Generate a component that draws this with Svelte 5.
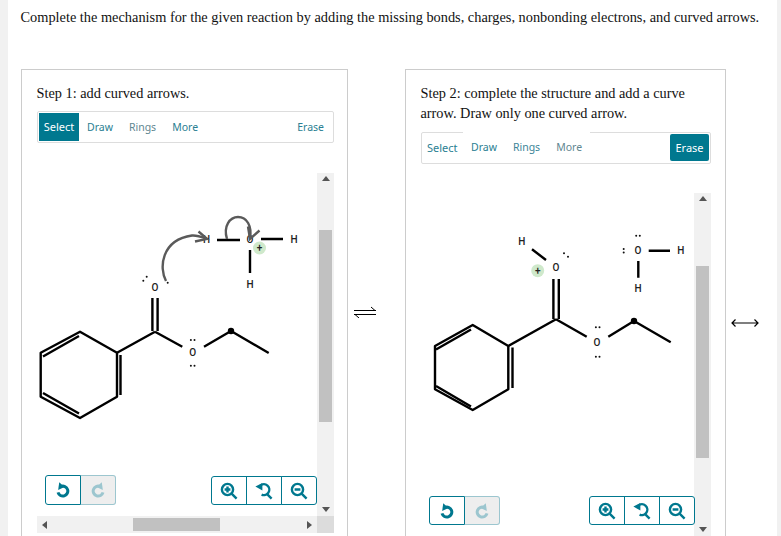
<script>
  const teal = '#00788f';
</script>

{#snippet undoIcon()}
  <svg class="ico" viewBox="0 0 16 16"><path d="M6 4.4A5 5 0 1 1 3 10.4" fill="none" stroke="currentColor" stroke-width="3"/><polygon points="3.6,0.6 3.6,8.4 9.4,4.6" fill="currentColor" transform="rotate(8 6 5)"/></svg>
{/snippet}
{#snippet redoIcon()}
  <svg class="ico" viewBox="0 0 16 16"><path d="M10 4.4A5 5 0 1 0 13 10.4" fill="none" stroke="currentColor" stroke-width="3"/><polygon points="12.4,0.6 12.4,8.4 6.6,4.6" fill="currentColor" transform="rotate(-8 10 5)"/></svg>
{/snippet}
{#snippet zoomIn()}
  <svg class="ico big" viewBox="0 0 18 18"><circle cx="7.5" cy="7.5" r="5.6" fill="none" stroke="currentColor" stroke-width="2.4"/><path d="M4.6 7.5h5.8M7.5 4.6v5.8M11.6 11.6l5 5" fill="none" stroke="currentColor" stroke-width="2.4"/></svg>
{/snippet}
{#snippet zoomOut()}
  <svg class="ico big" viewBox="0 0 18 18"><circle cx="7.5" cy="7.5" r="5.6" fill="none" stroke="currentColor" stroke-width="2.4"/><path d="M4.6 7.5h5.8M11.6 11.6l5 5" fill="none" stroke="currentColor" stroke-width="2.4"/></svg>
{/snippet}
{#snippet zoomReset()}
  <svg class="ico big" viewBox="0 0 18 18"><path d="M5.4 3.6A5.4 5.4 0 1 1 6.6 12.6" fill="none" stroke="currentColor" stroke-width="2.4"/><polygon points="0.4,4.6 7.4,1 7.4,8.6" fill="currentColor"/><path d="M11.6 11.6l5 5" fill="none" stroke="currentColor" stroke-width="2.4"/></svg>
{/snippet}

{#snippet controls(zoomClass)}
  <div class="group undo-group">
    <button class="cbtn">{@render undoIcon()}</button>
    <button class="cbtn off">{@render redoIcon()}</button>
  </div>
  <div class="group zoom-group {zoomClass}">
    <button class="cbtn">{@render zoomIn()}</button>
    <button class="cbtn">{@render zoomReset()}</button>
    <button class="cbtn">{@render zoomOut()}</button>
  </div>
{/snippet}

{#snippet pair(x, y, vertical)}
  {#if vertical}
    <circle cx={x} cy={y - 1.8} r="1"/><circle cx={x} cy={y + 1.8} r="1"/>
  {:else}
    <circle cx={x - 1.8} cy={y} r="1"/><circle cx={x + 1.8} cy={y} r="1"/>
  {/if}
{/snippet}

<div class="page">
  <p class="lead">Complete the mechanism for the given reaction by adding the missing bonds, charges, nonbonding electrons, and curved arrows.</p>

  <div class="row">
    <section class="panel p1">
      <p class="step">Step 1: add curved arrows.</p>
      <div class="toolbar">
        <span class="tool on">Select</span>
        <span class="tool">Draw</span>
        <span class="tool">Rings</span>
        <span class="tool">More</span>
        <span class="tool push">Erase</span>
      </div>
      <div class="scroller">
        <div class="canvas">
          <svg class="chem" width="280" height="343" viewBox="37 173 280 343">
            <g class="bonds">
              <path d="M80 331.7L117 352.7V396.7L80 418L40.7 396.7V352.7Z"/>
              <path d="M120.5 355V395M79 336L43 356.5M43 393L79 413.5"/>
              <path d="M117 352.7L155 331.7M152.4 331V298M157.6 331V298M155 331.7L182.3 346.7M204 346.7L231 331L268.7 353"/>
              <path d="M217 240H240M261 239H283M250 250V273"/>
            </g>
            <circle cx="231" cy="331" r="3.2" fill="#000"/>
            <circle cx="259.5" cy="248" r="6.5" fill="#cfe9cb"/>
            <g class="atoms">
              <text x="155" y="287">O</text><text x="192.7" y="352.7">O</text>
              <text x="206.5" y="239">H</text><text x="250" y="239">O</text>
              <text x="294" y="239">H</text><text x="250" y="284">H</text>
              <text x="259.5" y="247.5">+</text>
            </g>
            <g fill="#111">
              <circle cx="143.3" cy="280.7" r="1"/><circle cx="146.7" cy="276.7" r="1"/>
              {@render pair(192.7, 340, false)}
              {@render pair(192.7, 365.7, false)}
            </g>
            <g class="curve">
              <path d="M166 281C159 268 161 240 192 235.5C197 235 202 237 207 238.8"/>
              <path d="M198.5 231.5L207 238.8L195 241.5"/>
              <path d="M227 239C223 226 230 217 238 217C247 217 252 226 250 238"/>
              <path d="M248 226.5L250 239L259.5 230.5"/>
            </g>
            <circle cx="167.7" cy="282.7" r="1" fill="#111"/>
          </svg>
          {@render controls('')}
        </div>
        <div class="vbar">
          <span class="arr up"></span>
          <span class="vthumb"></span>
          <span class="arr down"></span>
        </div>
        <div class="hbar">
          <span class="arr left"></span>
          <span class="hthumb"></span>
          <span class="arr right"></span>
        </div>
        <div class="corner"></div>
      </div>
    </section>

    <div class="sep eq">
      <svg width="22" height="12" viewBox="0 0 22 12"><path d="M0 4.5H22M17 1L21 4.5M0 8.5H22M1 8.5L5 12" fill="none" stroke="#000" stroke-width="1"/></svg>
    </div>

    <section class="panel p2">
      <p class="step">Step 2: complete the structure and add a curve arrow. Draw only one curved arrow.</p>
      <div class="toolbar">
        <span class="tool first">Select</span>
        <div class="raised">
          <span class="tool">Draw</span>
          <span class="tool">Rings</span>
          <span class="tool">More</span>
        </div>
        <span class="tool on push round">Erase</span>
      </div>
      <div class="scroller s2">
        <div class="canvas">
          <svg class="chem" width="273" height="343" viewBox="421 193 273 343">
            <g class="bonds">
              <path d="M472.7 325L508.3 346V389.3L472.7 410L435 389.3V346Z"/>
              <path d="M512.5 347.5V388M471 329.5L436 349.5M436 386L471 406.5"/>
              <path d="M508.3 346L556 319.3M553.4 319V279M558.8 319V279M556 319.3L586.7 336.7M608.3 336.7L634 321L670.7 342.3"/>
              <path d="M532 249.3L546 260M648.7 250.7H670M638.3 261V277.7"/>
            </g>
            <circle cx="634" cy="321" r="3.2" fill="#000"/>
            <circle cx="537.7" cy="270.7" r="6.5" fill="#cfe9cb"/>
            <g class="atoms">
              <text x="556" y="267">O</text><text x="597" y="342.7">O</text>
              <text x="521.7" y="241.7">H</text><text x="638" y="250.7">O</text>
              <text x="680.7" y="250.7">H</text><text x="638" y="288.3">H</text>
              <text x="537.7" y="270.2">+</text>
            </g>
            <g fill="#111">
              <circle cx="564" cy="253.3" r="1"/><circle cx="568" cy="256.7" r="1"/>
              {@render pair(597.7, 327.3, false)}
              {@render pair(597.7, 356.7, false)}
              {@render pair(638, 235.7, false)}
              {@render pair(623.7, 250.7, true)}
            </g>
          </svg>
          {@render controls('z2')}
        </div>
        <div class="vbar">
          <span class="arr up"></span>
          <span class="vthumb t2"></span>
          <span class="arr down"></span>
        </div>
      </div>
    </section>

    <div class="sep res">
      <svg width="28" height="8" viewBox="0 0 28 8"><path d="M1 4H27M4.5 0.5L1 4L4.5 7.5M23.5 0.5L27 4L23.5 7.5" fill="none" stroke="#000" stroke-width="1.2"/></svg>
    </div>
  </div>
</div>

<style>
  :global(body) { margin: 0; background: #fff; }
  .page {
    width: 781px; height: 536px; overflow: hidden; box-sizing: border-box;
    border-left: 8px solid #f1f1f1; border-right: 4px solid #f1f1f1;
    font-family: "Liberation Serif", serif; color: #111;
  }
  .lead { margin: 0; padding: 9px 0 0 12.5px; font-size: 14.35px; line-height: 17px; white-space: nowrap; height: 60px; }
  .row { display: flex; align-items: flex-start; padding-left: 13px; margin-top: 0; }
  .panel { border: 1px solid #ccc; box-sizing: border-box; padding: 13px 14px 0 15px; height: 480px; background: #fff; flex: none; }
  .p1 { width: 327px; padding-right: 13px; }
  .p2 { width: 321px; }
  .step { margin: 0 0 0 -0.5px; font-size: 14.3px; line-height: 20px; }
  .toolbar {
    display: flex; align-items: center; box-sizing: border-box; height: 32px;
    border: 1px solid #ddd; border-radius: 2px; padding: 1px; margin-top: 8px;
    font-family: "Noto Sans", sans-serif; font-size: 10.5px; color: #2b7f93;
  }
  .p2 .toolbar { margin-top: 9px; }
  .tool { padding: 0 8px; height: 28px; line-height: 28px; box-sizing: border-box; }
  .tool:nth-child(3) { color: #5f8791; }
  .tool.on { background: #00788f; color: #fff; width: 40px; padding: 0; text-align: center; font-size: 11px; }
  .tool.first { padding: 0 4px; width: 40px; flex: none; font-size: 11px; }
  .tool.push { margin-left: auto; }
  .tool.round { border-radius: 2px; width: 39px; height: 27px; line-height: 27px; align-self: flex-start; }
  .raised { display: flex; background: #fff; margin-top: -2px; align-self: flex-start; padding-top: 1px; height: 29px; }
  .raised .tool:nth-child(2) { color: #3d8598; }
  .scroller { display: grid; grid-template-columns: 1fr 17px; grid-template-rows: 343px 17px; margin-top: 30px; width: 297px; }
  .s2 { margin-top: 29px; width: 290px; }
  .canvas { position: relative; }
  .chem { display: block; }
  .bonds path { fill: none; stroke: #000; stroke-width: 2.4; stroke-linejoin: round; }
  .atoms text { font-family: Roboto, sans-serif; font-size: 10px; font-weight: 500; fill: #222; text-anchor: middle; dominant-baseline: central; }
  .curve path { fill: none; stroke: #5a5a5a; stroke-width: 2.4; }
  .vbar { background: #f1f1f1; display: flex; flex-direction: column; align-items: center; }
  .vthumb { width: 13px; height: 192px; background: #c1c1c1; margin-top: 40px; flex: none; }
  .vthumb.t2 { margin-top: 56px; }
  .arr { width: 17px; height: 17px; position: relative; flex: none; display: block; }
  .arr.down { margin-top: auto; }
  .arr::after { content: ""; position: absolute; width: 0; height: 0; border: 4px solid transparent; }
  .arr.up::after { left: 4.5px; top: 3px; border-top: 0; border-bottom: 5px solid #555; }
  .arr.down::after { left: 4.5px; top: 8px; border-bottom: 0; border-top: 5px solid #555; }
  .arr.left::after { left: 5px; top: 4.5px; border-left: 0; border-right: 5px solid #555; }
  .arr.right::after { left: 7px; top: 4.5px; border-right: 0; border-left: 5px solid #555; }
  .hbar { background: #f1f1f1; display: flex; align-items: center; }
  .hthumb { width: 87px; height: 13px; background: #c1c1c1; margin-left: 79px; }
  .arr.right { margin-left: auto; }
  .corner { background: #dcdcdc; }
  .group { position: absolute; display: flex; top: 302px; height: 30px; box-sizing: border-box; }
  .undo-group { left: 8px; }
  .zoom-group { left: 174px; top: 303px; height: 29px; }
  .zoom-group.z2 { left: 168px; }
  .p2 .undo-group { top: 303px; height: 29px; }
  .cbtn {
    width: 36px; margin: 0 0 0 -1px; padding: 0; background: #fff; border: 1px solid #00788f; color: #00788f;
    display: flex; align-items: center; justify-content: center; box-sizing: border-box;
  }
  .cbtn:first-child { margin-left: 0; border-radius: 3px 0 0 3px; }
  .cbtn:last-child { border-radius: 0 3px 3px 0; }
  .cbtn.off { background: #eee; border-color: #9cc6cf; border-left-color: #00788f; color: #9cc6cf; }
  .ico { width: 16px; height: 16px; display: block; }
  .ico.big { width: 18px; height: 18px; }
  .sep { flex: none; }
  .sep svg { display: block; }
  .eq { width: 57px; margin-top: 237px; padding-left: 6px; box-sizing: border-box; }
  .res { margin-top: 250px; margin-left: 5px; }
</style>
